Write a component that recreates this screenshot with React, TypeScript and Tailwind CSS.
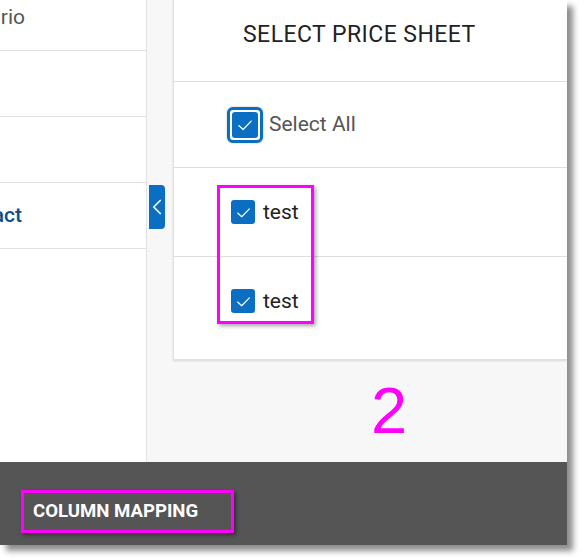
import { ChevronLeft } from "lucide-react";

function CheckBox({ focused = false }: { focused?: boolean }) {
  const box = (
    <span className="flex h-[24px] w-[24px] items-center justify-center rounded-[3px] bg-[#0a6fc2]">
      <svg width="17" height="17" viewBox="0 0 16 16" fill="none">
        <path d="M2.5 8.5 L6.3 12 L13.5 4.5" stroke="white" strokeWidth="1.1" strokeLinecap="round" strokeLinejoin="round" />
      </svg>
    </span>
  );
  if (!focused) return box;
  return (
    <span className="flex h-[36px] w-[36px] items-center justify-center rounded-[6px] border-[3px] border-[#0a6fc2] bg-white shadow-[0_0_2px_rgba(0,0,0,0.3)]">
      <span className="flex h-[26px] w-[26px] items-center justify-center rounded-[3px] bg-[#0a6fc2]">
        <svg width="18" height="18" viewBox="0 0 16 16" fill="none">
          <path d="M2.5 8.5 L6.3 12 L13.5 4.5" stroke="white" strokeWidth="1.1" strokeLinecap="round" strokeLinejoin="round" />
        </svg>
      </span>
    </span>
  );
}

export default function App() {
  return (
    <div className="h-[559px] w-[582px] bg-white font-['Roboto',sans-serif]">
      <div className="flex h-[545px] w-[567px] flex-col overflow-hidden shadow-[6px_6px_6px_rgba(0,0,0,0.45)]">
        <div className="flex h-[462px]">
          {/* left list */}
          <div className="w-[147px] overflow-hidden border-r border-[#e2e2e2] bg-white">
            <div className="mt-[-15px]">
              <div className="flex h-[66px] w-[146px] items-center border-b border-[#e0e0e0]">
                <span className="flex w-[25px] justify-end whitespace-nowrap text-[21px] text-[#555]">Scenario</span>
              </div>
              <div className="h-[66px] border-b border-[#e0e0e0]" />
              <div className="h-[66px] border-b border-[#e0e0e0]" />
              <div className="flex h-[66px] items-center border-b border-[#e0e0e0]">
                <span className="flex w-[22px] justify-end whitespace-nowrap text-[21px] font-medium text-[#0b4f8c]">Contract</span>
              </div>
            </div>
          </div>

          {/* right area */}
          <div className="relative flex-1 bg-[#f7f7f7]">
            <button className="absolute left-[2px] top-[185px] flex h-[44px] w-[16px] items-center justify-center rounded-r-[4px] bg-[#0a6fc2] text-white">
              <ChevronLeft size={26} strokeWidth={1.6} className="shrink-0" />
            </button>

            <div className="relative ml-[26px] h-[360px] border-b border-l border-[#e0e0e0] bg-white shadow-[0_1px_2px_rgba(0,0,0,0.12)]">
              <div className="h-[82px] border-b border-[#dedede] pl-[69px] pt-[18px] text-[23px] tracking-[0.45px] text-[#222]">
                SELECT PRICE SHEET
              </div>
              <div className="flex h-[86px] items-center gap-[6px] border-b border-[#dedede] pl-[53px]">
                <CheckBox focused />
                <span className="text-[21px] text-[#555]">Select All</span>
              </div>
              <div className="flex h-[89px] items-start gap-[8px] border-b border-[#dedede] pl-[57px] pt-[32px]">
                <CheckBox />
                <span className="text-[21px] leading-[24px] text-[#222]">test</span>
              </div>
              <div className="flex items-start gap-[8px] pl-[57px] pt-[32px]">
                <CheckBox />
                <span className="text-[21px] leading-[24px] text-[#222]">test</span>
              </div>

              <div className="absolute left-[43px] top-[185px] h-[139px] w-[97px] border-[3px] border-[#ff00ff] shadow-[2px_2px_4px_rgba(0,0,0,0.35)]" />
            </div>

            <div className="flex justify-center pl-[64px] pt-[14px]">
              <span className="font-['Liberation_Sans',sans-serif] text-[65px] leading-[74px] text-[#ff00ff] [text-shadow:0_0_2px_white,0_0_2px_white,0_0_3px_white]">
                2
              </span>
            </div>
          </div>
        </div>

        <div className="h-[83px] bg-[#555555] pl-[21px] pt-[28px]">
          <div className="flex h-[43px] w-[213px] items-center border-[3px] border-[#ff00ff] pl-[9px] shadow-[2px_2px_4px_rgba(0,0,0,0.45)]">
            <span className="text-[18.6px] font-bold text-white">COLUMN MAPPING</span>
          </div>
        </div>
      </div>
    </div>
  );
}
